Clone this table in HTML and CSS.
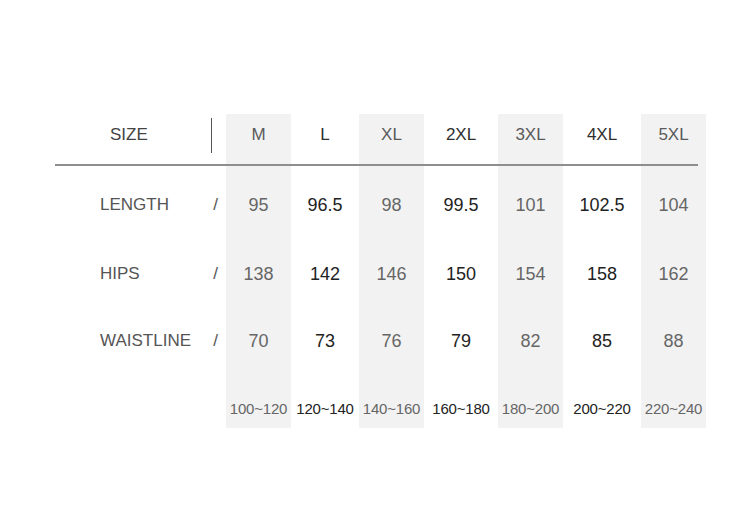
FILE: index.html
```html
<!DOCTYPE html>
<html>
<head>
<meta charset="utf-8">
<link rel="stylesheet" href="styles.css">
</head>
<body>
<div class="page">
  <div class="chart">
    <div class="lab head"><span>SIZE</span><i class="divider"></i></div>
    <div class="c sh hd">M</div>
    <div class="c dk hd">L</div>
    <div class="c sh hd">XL</div>
    <div class="c dk hd">2XL</div>
    <div class="c sh hd">3XL</div>
    <div class="c dk hd">4XL</div>
    <div class="c sh hd">5XL</div>

    <div class="rl"><i class="rule"></i></div>
    <div class="rl sh"><i class="rule"></i></div>
    <div class="rl"><i class="rule"></i></div>
    <div class="rl sh"><i class="rule"></i></div>
    <div class="rl"><i class="rule"></i></div>
    <div class="rl sh"><i class="rule"></i></div>
    <div class="rl"><i class="rule"></i></div>
    <div class="rl sh"><i class="rule end"></i></div>

    <div class="lab"><span>LENGTH</span><span class="slash">/</span></div>
    <div class="c sh">95</div>
    <div class="c dk">96.5</div>
    <div class="c sh">98</div>
    <div class="c dk">99.5</div>
    <div class="c sh">101</div>
    <div class="c dk">102.5</div>
    <div class="c sh">104</div>

    <div class="lab"><span>HIPS</span><span class="slash">/</span></div>
    <div class="c sh">138</div>
    <div class="c dk">142</div>
    <div class="c sh">146</div>
    <div class="c dk">150</div>
    <div class="c sh">154</div>
    <div class="c dk">158</div>
    <div class="c sh">162</div>

    <div class="lab"><span>WAISTLINE</span><span class="slash">/</span></div>
    <div class="c sh">70</div>
    <div class="c dk">73</div>
    <div class="c sh">76</div>
    <div class="c dk">79</div>
    <div class="c sh">82</div>
    <div class="c dk">85</div>
    <div class="c sh">88</div>

    <div class="lab foot"></div>
    <div class="c sh ft">100~120</div>
    <div class="c dk ft">120~140</div>
    <div class="c sh ft">140~160</div>
    <div class="c dk ft">160~180</div>
    <div class="c sh ft">180~200</div>
    <div class="c dk ft">200~220</div>
    <div class="c sh ft">220~240</div>
  </div>
</div>
</body>
</html>
```

FILE: styles.css
```css
html, body {
  margin: 0;
  padding: 0;
  background: #ffffff;
}

.page {
  width: 750px;
  height: 509px;
  padding: 114px 0 0 55px;
  box-sizing: border-box;
  font-family: "Liberation Sans", Arial, sans-serif;
}

.chart {
  display: grid;
  grid-template-columns: 171px 65px 68px 65px 74px 65px 78px 65px;
  grid-template-rows: 42px 18px 62px 75px 60px 57px;
}

.sh {
  background: #f2f2f2;
}

.c {
  display: flex;
  align-items: center;
  justify-content: center;
  font-size: 18px;
  line-height: 20px;
  color: #666666;
  white-space: nowrap;
}

.c.dk {
  color: #222222;
}

.c.hd {
  font-size: 17px;
  color: #5a5a5a;
}

.c.dk.hd {
  color: #2e2e2e;
}

.c.ft {
  font-size: 15px;
  align-items: flex-end;
  padding-bottom: 9px;
  letter-spacing: -0.2px;
}

.lab {
  display: flex;
  align-items: center;
  justify-content: space-between;
  padding: 0 8px 0 45px;
  font-size: 17px;
  line-height: 20px;
  color: #555555;
}

.lab.head {
  padding: 0 14px 0 55px;
  color: #444444;
}

.divider {
  display: block;
  width: 1px;
  height: 35px;
  background: #555555;
}

.slash {
  color: #555555;
}

.rl {
  display: flex;
  align-items: flex-start;
}

.rule {
  display: block;
  width: 100%;
  height: 2px;
  margin-top: 8px;
  background: #8e8e8e;
}

.rule.end {
  margin-right: 8px;
}
```
